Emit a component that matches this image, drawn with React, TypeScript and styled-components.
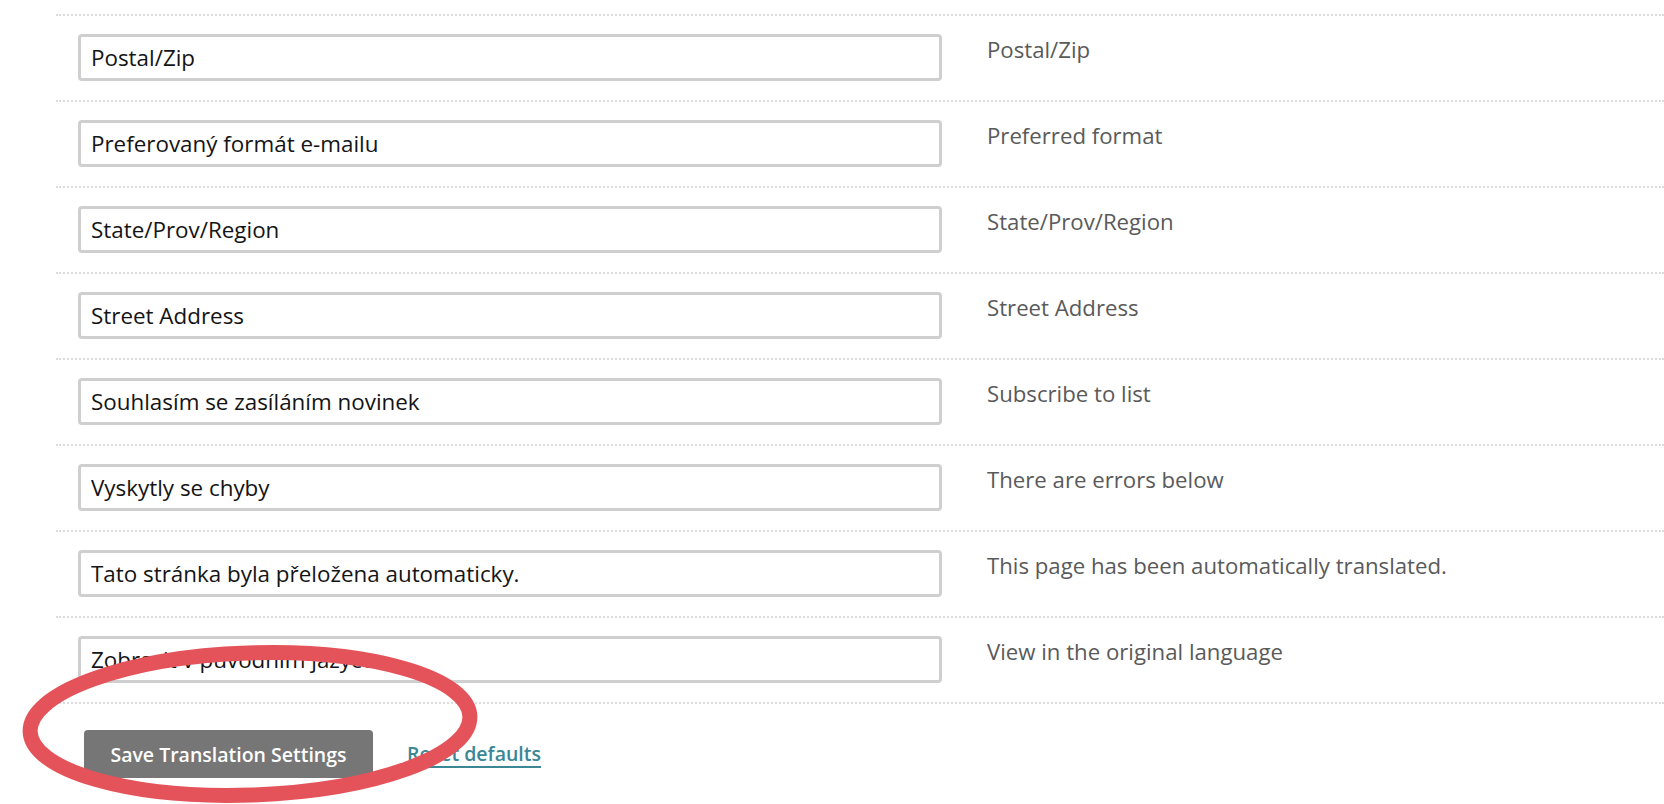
import React from "react";
import styled, { createGlobalStyle } from "styled-components";

const GlobalStyle = createGlobalStyle`
  html, body { margin: 0; padding: 0; background: #ffffff; }
  body { font-family: "Open Sans", "Noto Sans", "Liberation Sans", sans-serif; }
  * { box-sizing: border-box; }
`;

const Page = styled.div`
  position: relative;
  width: 1664px;
  height: 804px;
  overflow: hidden;
  padding: 14px 0 0 56px;
  background: #fff;
`;

const List = styled.div`
  display: flex;
  flex-direction: column;
  border-bottom: 2px dotted #dcdcdc;
`;

const Row = styled.div`
  display: flex;
  align-items: flex-start;
  border-top: 2px dotted #dcdcdc;
  padding: 18px 0 19px 22px;
`;

const TextInput = styled.input`
  width: 864px;
  height: 47px;
  border: 3px solid #cfcfcf;
  border-radius: 4px;
  padding: 0 0 0 10px;
  font-family: "Open Sans", "Noto Sans", sans-serif;
  font-size: 22.4px;
  color: #141414;
  background: #fff;
  outline: none;
`;

const Label = styled.div`
  margin: 1px 0 0 45px;
  font-family: "Open Sans", "Noto Sans", sans-serif;
  font-size: 22.2px;
  line-height: 30px;
  color: #5a5a5a;
  white-space: nowrap;
`;

const Footer = styled.div`
  display: flex;
  align-items: center;
  gap: 34px;
  padding: 26px 0 0 28px;
`;

const SaveButton = styled.button`
  width: 289px;
  height: 48px;
  border: none;
  border-radius: 4px;
  background: #767676;
  color: #ffffff;
  font-family: "Open Sans", "Noto Sans", sans-serif;
  font-weight: 600;
  font-size: 19.5px;
  padding: 0;
  cursor: pointer;
`;

const ResetLink = styled.a`
  font-family: "Open Sans", "Noto Sans", sans-serif;
  font-weight: 600;
  font-size: 19.5px;
  line-height: 25px;
  color: #3b8795;
  text-decoration: none;
  border-bottom: 2px solid #3b8795;
  padding-bottom: 0;
  cursor: pointer;
`;

const Annotation = styled.svg`
  position: absolute;
  left: 0;
  top: 630px;
  width: 500px;
  height: 174px;
  pointer-events: none;
  overflow: visible;
`;

const rows: [string, string][] = [
  ["Postal/Zip", "Postal/Zip"],
  ["Preferovaný formát e-mailu", "Preferred format"],
  ["State/Prov/Region", "State/Prov/Region"],
  ["Street Address", "Street Address"],
  ["Souhlasím se zasíláním novinek", "Subscribe to list"],
  ["Vyskytly se chyby", "There are errors below"],
  ["Tato stránka byla přeložena automaticky.", "This page has been automatically translated."],
  ["Zobrazit v původním jazyce", "View in the original language"],
];

export default function App() {
  return (
    <>
      <GlobalStyle />
      <Page>
        <List>
          {rows.map(([value, label]) => (
            <Row key={label}>
              <TextInput type="text" defaultValue={value} />
              <Label>{label}</Label>
            </Row>
          ))}
        </List>
        <Footer>
          <SaveButton type="button">Save Translation Settings</SaveButton>
          <ResetLink href="#">Reset defaults</ResetLink>
        </Footer>
        <Annotation viewBox="0 0 500 174">
          <ellipse
            cx="250"
            cy="94"
            rx="220"
            ry="71"
            fill="none"
            stroke="#e5535a"
            strokeWidth="15"
            transform="rotate(-2 250 94)"
          />
        </Annotation>
      </Page>
    </>
  );
}
